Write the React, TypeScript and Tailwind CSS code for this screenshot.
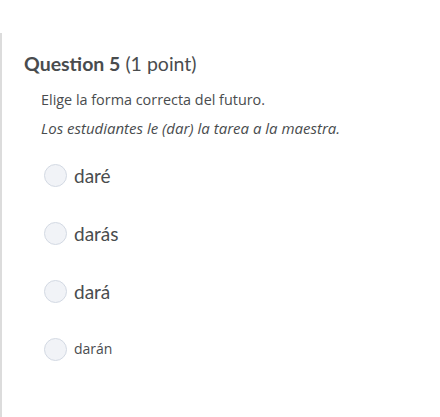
const options = [
  { label: "daré", size: "text-[19px] font-['Lato',sans-serif]" },
  { label: "darás", size: "text-[19px] font-['Lato',sans-serif]" },
  { label: "dará", size: "text-[19px] font-['Lato',sans-serif]" },
  { label: "darán", size: "text-[14px] font-['Open_Sans',sans-serif]" },
];

export default function App() {
  return (
    <div className="h-[417px] w-[440px] bg-white pt-[33px] font-['Lato','Noto_Sans',sans-serif] text-[#494c4e]">
      <div className="h-full border-l-2 border-[#dcdcdc] pl-[22px] pt-[18px]">
        <h2 className="text-[19.5px] leading-[26px]">
          <span className="font-bold">Question 5</span> (1 point)
        </h2>
        <div className="mt-[13px] pl-[17px] font-['Open_Sans',sans-serif]">
          <p className="text-[14.4px] leading-[20px]">Elige la forma correcta del futuro.</p>
          <p className="mt-[8px] text-[15px] italic leading-[20px]">
            Los estudiantes le (dar) la tarea a la maestra.
          </p>
        </div>
        <ul className="mt-[25px] flex flex-col gap-[34px] pl-[20px]">
          {options.map((o) => (
            <li key={o.label} className="flex h-[24px] items-center gap-[7px]">
              <span className="h-[23px] w-[23px] shrink-0 rounded-full border border-[#d3d9e3] bg-[#f1f3f7]" />
              <span className={`${o.size} leading-none`}>{o.label}</span>
            </li>
          ))}
        </ul>
      </div>
    </div>
  );
}
